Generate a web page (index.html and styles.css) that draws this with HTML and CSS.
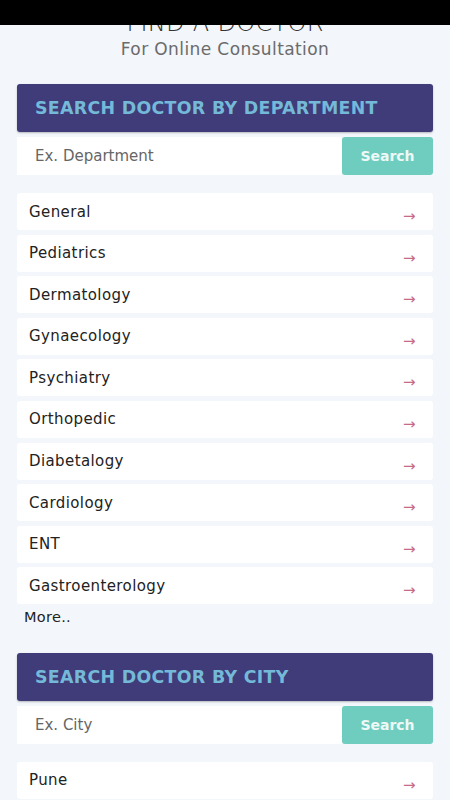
FILE: index.html
```html
<!DOCTYPE html>
<html lang="en">
<head>
    <meta charset="UTF-8">
    <meta name="viewport" content="width=device-width, initial-scale=1.0">
    <title>Find a Doctor</title>
    <link rel="stylesheet" href="styles.css">
</head>
<body>
    <div class="status-bar"></div>

    <div class="page">
        <div class="intro">
            <h1>FIND A DOCTOR</h1>
            <p>For Online Consultation</p>
        </div>

        <section class="finder">
            <h2 class="finder-head">SEARCH DOCTOR BY DEPARTMENT</h2>
            <form class="search-row" onsubmit="return false">
                <input type="text" placeholder="Ex. Department">
                <button type="submit">Search</button>
            </form>
            <ul class="option-list">
                <li><span>General</span><span class="arrow">&rarr;</span></li>
                <li><span>Pediatrics</span><span class="arrow">&rarr;</span></li>
                <li><span>Dermatology</span><span class="arrow">&rarr;</span></li>
                <li><span>Gynaecology</span><span class="arrow">&rarr;</span></li>
                <li><span>Psychiatry</span><span class="arrow">&rarr;</span></li>
                <li><span>Orthopedic</span><span class="arrow">&rarr;</span></li>
                <li><span>Diabetalogy</span><span class="arrow">&rarr;</span></li>
                <li><span>Cardiology</span><span class="arrow">&rarr;</span></li>
                <li><span>ENT</span><span class="arrow">&rarr;</span></li>
                <li><span>Gastroenterology</span><span class="arrow">&rarr;</span></li>
            </ul>
            <a class="more" href="#">More..</a>
        </section>

        <section class="finder">
            <h2 class="finder-head">SEARCH DOCTOR BY CITY</h2>
            <form class="search-row" onsubmit="return false">
                <input type="text" placeholder="Ex. City">
                <button type="submit">Search</button>
            </form>
            <ul class="option-list">
                <li><span>Pune</span><span class="arrow">&rarr;</span></li>
            </ul>
        </section>
    </div>
</body>
</html>
```

FILE: styles.css
```css
* {
    margin: 0;
    padding: 0;
    box-sizing: border-box;
}

body {
    font-family: "DejaVu Sans", sans-serif;
    background: #f3f6fa;
    color: #222;
    overflow: hidden;
}

.status-bar {
    position: fixed;
    top: 0;
    left: 0;
    right: 0;
    height: 25px;
    background: #000;
    z-index: 10;
}

.page {
    padding: 0 17px;
}

.intro {
    text-align: center;
    padding-top: 10px;
}

.intro h1 {
    font-size: 24px;
    font-weight: 300;
    line-height: 26px;
    color: #333;
    letter-spacing: 0.3px;
}

.intro p {
    margin-top: 2px;
    font-size: 17px;
    line-height: 22px;
    color: #6b6b6b;
    letter-spacing: 0.4px;
}

.finder {
    margin-top: 24px;
}

.finder + .finder {
    margin-top: 28px;
}

.finder-head {
    background: #3f3c79;
    color: #74b9d8;
    font-size: 17.4px;
    font-weight: 700;
    letter-spacing: 0.3px;
    height: 48px;
    line-height: 48px;
    padding: 0 18px;
    border-radius: 3px;
    box-shadow: 0 1px 2px rgba(0,0,0,0.25);
}

.search-row {
    display: flex;
    height: 38px;
    margin-top: 5px;
}

.search-row input {
    flex: 1;
    min-width: 0;
    border: none;
    outline: none;
    background: #fff;
    padding: 0 18px;
    font-family: inherit;
    font-size: 15px;
    color: #222;
}

.search-row input::placeholder {
    color: #666;
}

.search-row button {
    width: 91px;
    border: none;
    border-radius: 3px;
    background: #6fcdbf;
    color: #eef8f6;
    font-family: inherit;
    font-size: 14px;
    font-weight: 700;
    cursor: pointer;
}

.option-list {
    list-style: none;
    margin-top: 18px;
}

.option-list li {
    display: flex;
    justify-content: space-between;
    align-items: center;
    height: 37px;
    margin-bottom: 4.6px;
    padding: 0 17px 0 12px;
    background: #fff;
    border-radius: 3px;
    font-size: 15px;
    letter-spacing: 0.4px;
    color: #222;
}

.arrow {
    color: #c76a86;
    font-size: 15px;
    padding-top: 9px;
}

.more {
    display: block;
    margin-top: 4px;
    padding-left: 7px;
    font-size: 14.5px;
    letter-spacing: 0.3px;
    color: #222;
    text-decoration: none;
}
```
